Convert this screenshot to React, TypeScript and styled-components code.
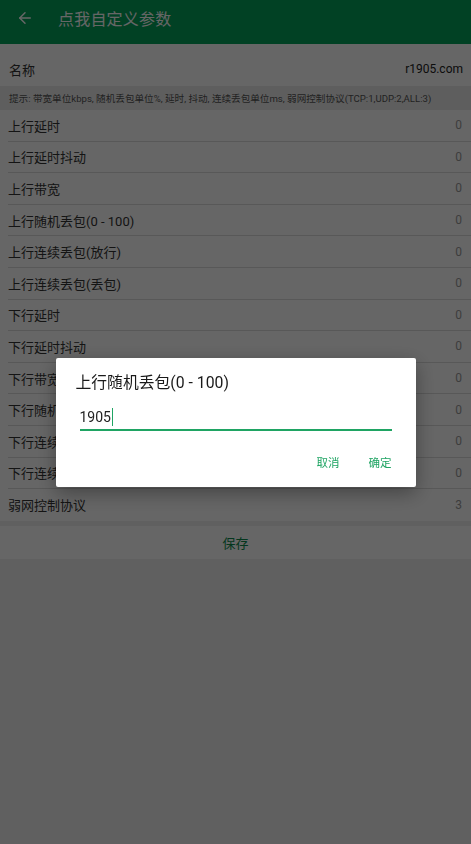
import styled, { createGlobalStyle } from "styled-components";
import { ArrowLeft } from "lucide-react";

const GlobalStyle = createGlobalStyle`
  html, body {
    margin: 0;
    padding: 0;
    background: #f0f0f0;
    font-family: Roboto, "Noto Sans CJK SC", sans-serif;
  }
  * {
    box-sizing: border-box;
  }
`;

const Page = styled.div`
  display: flex;
  flex-direction: column;
  min-height: 100vh;
  background: #f0f0f0;
`;

const Header = styled.header`
  display: flex;
  align-items: center;
  height: 44px;
  padding: 0 0 8px 16px;
  background-color: #03a25b;
  color: #ffffff;
`;

const Title = styled.h1`
  margin: 0 0 0 24px;
  font-size: 16px;
  font-weight: 400;
  letter-spacing: 0.2px;
`;

const NameRow = styled.div`
  display: flex;
  align-items: center;
  justify-content: space-between;
  height: 42px;
  padding: 8px 8px 0 9px;
  background: #ffffff;
  font-size: 13px;
  color: #333333;
`;

const NameValue = styled.span`
  font-size: 12px;
  color: #222222;
`;

const Hint = styled.div`
  display: flex;
  align-items: center;
  height: 24px;
  padding: 0 9px;
  background: #ececec;
  font-size: 9.6px;
  color: #555555;
  white-space: nowrap;
`;

const List = styled.div`
  background: #ffffff;
`;

const Row = styled.div<{ $last?: boolean }>`
  display: flex;
  align-items: center;
  justify-content: space-between;
  height: 31.6px;
  margin-left: 8px;
  padding-right: 9px;
  border-bottom: ${(p) => (p.$last ? "none" : "1px solid #dcdcdc")};
  font-size: 13px;
`;

const Label = styled.span`
  color: #333333;
`;

const Value = styled.span`
  font-size: 12px;
  color: #9a9a9a;
`;

const SaveButton = styled.button`
  display: block;
  width: 100%;
  height: 33px;
  margin-top: 5px;
  border: none;
  background: #ffffff;
  color: #0a8a4c;
  font-family: inherit;
  font-size: 13px;
`;

const Overlay = styled.div`
  position: fixed;
  inset: 0;
  display: flex;
  align-items: center;
  justify-content: center;
  background: rgba(0, 0, 0, 0.6);
`;

const Dialog = styled.div`
  width: 360px;
  height: 129px;
  padding: 14px 24px 10px 24px;
  background: #ffffff;
  border-radius: 2px;
  box-shadow: 0 6px 20px rgba(0, 0, 0, 0.35);
`;

const DialogTitle = styled.div`
  margin-left: -4px;
  line-height: 22px;
  font-size: 15.8px;
  font-weight: 400;
  color: #1a1a1a;
`;

const Field = styled.div`
  display: flex;
  align-items: center;
  height: 26px;
  margin-top: 11px;
  border-bottom: 2px solid #1fa463;
  font-size: 14px;
  color: #222222;
`;

const Caret = styled.span`
  display: inline-block;
  width: 1.5px;
  height: 18px;
  margin-left: 1px;
  background: #1fa463;
`;

const Actions = styled.div`
  display: flex;
  justify-content: flex-end;
  gap: 29px;
  margin-top: 16px;
`;

const ActionButton = styled.button`
  height: 30px;
  padding: 0;
  border: none;
  background: transparent;
  color: #1fa463;
  font-family: inherit;
  font-size: 11.5px;
`;

const rows: [string, string][] = [
  ["上行延时", "0"],
  ["上行延时抖动", "0"],
  ["上行带宽", "0"],
  ["上行随机丢包(0 - 100)", "0"],
  ["上行连续丢包(放行)", "0"],
  ["上行连续丢包(丢包)", "0"],
  ["下行延时", "0"],
  ["下行延时抖动", "0"],
  ["下行带宽", "0"],
  ["下行随机丢包(0 - 100)", "0"],
  ["下行连续丢包(放行)", "0"],
  ["下行连续丢包(丢包)", "0"],
  ["弱网控制协议", "3"],
];

const App = () => {
  return (
    <>
      <GlobalStyle />
      <Page>
        <Header>
          <ArrowLeft size={18} strokeWidth={2} />
          <Title>点我自定义参数</Title>
        </Header>
        <NameRow>
          <span>名称</span>
          <NameValue>r1905.com</NameValue>
        </NameRow>
        <Hint>
          提示: 带宽单位kbps, 随机丢包单位%, 延时, 抖动, 连续丢包单位ms, 弱网控制协议(TCP:1,UDP:2,ALL:3)
        </Hint>
        <List>
          {rows.map(([label, value], i) => (
            <Row key={label} $last={i === rows.length - 1}>
              <Label>{label}</Label>
              <Value>{value}</Value>
            </Row>
          ))}
        </List>
        <SaveButton>保存</SaveButton>
      </Page>
      <Overlay>
        <Dialog>
          <DialogTitle>上行随机丢包(0 - 100)</DialogTitle>
          <Field>
            1905
            <Caret />
          </Field>
          <Actions>
            <ActionButton>取消</ActionButton>
            <ActionButton>确定</ActionButton>
          </Actions>
        </Dialog>
      </Overlay>
    </>
  );
};

export default App;
